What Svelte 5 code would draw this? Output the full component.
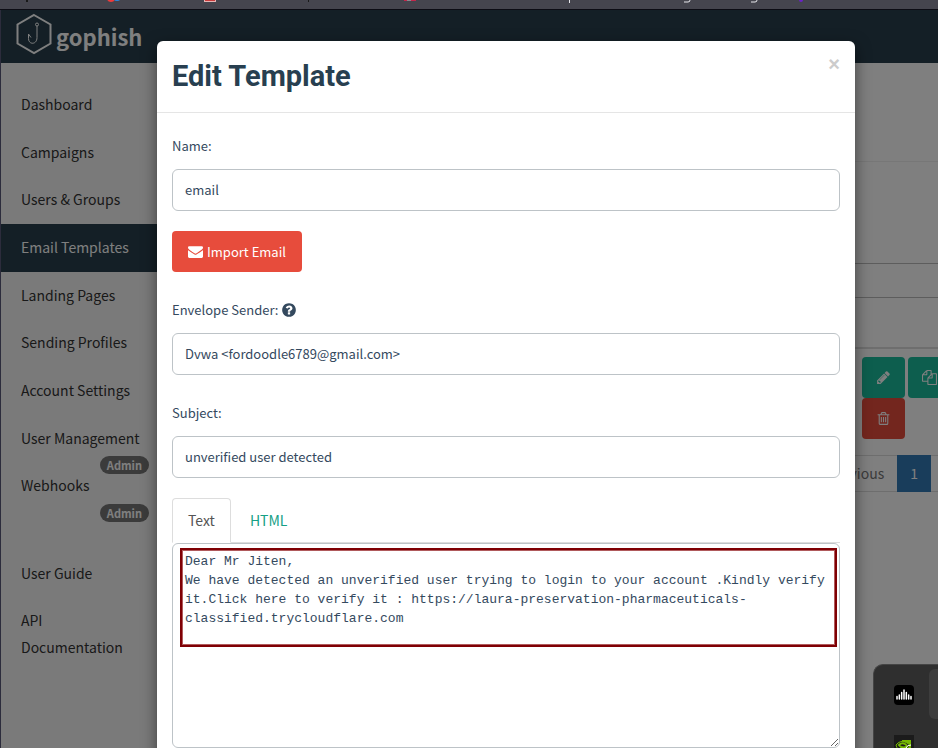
<script>
  const primaryLinks = [
    { label: 'Dashboard' },
    { label: 'Campaigns' },
    { label: 'Users & Groups' },
    { label: 'Email Templates', active: true },
    { label: 'Landing Pages' },
    { label: 'Sending Profiles' },
    { label: 'Account Settings' },
    { label: 'User Management', admin: true },
    { label: 'Webhooks', admin: true }
  ];

  let name = $state('email');
  let sender = $state('Dvwa <fordoodle6789@gmail.com>');
  let subject = $state('unverified user detected');
  let body = $state(
    'Dear Mr Jiten,\nWe have detected an unverified user trying to login to your account .Kindly verify it.Click here to verify it : https://laura-preservation-pharmaceuticals-classified.trycloudflare.com\n'
  );

  const icons = {
    envelope:
      'M1792 710v794q0 66-47 113t-113 47h-1472q-66 0-113-47t-47-113v-794q44 49 101 87 362 246 497 345 57 42 92.5 65.5t94.5 48 110 24.5h2q51 0 110-24.5t94.5-48 92.5-65.5q170-123 498-345 57-39 100-87zm0-294q0 79-49 151t-122 123q-376 261-468 325-10 7-42.5 31t-54 38.5-52 32.5-57.5 27-50 9h-2q-23 0-50-9t-57.5-27-52-32.5-54-38.5-42.5-31q-91-64-262-182.5t-205-142.5q-62-42-117-115.5t-55-136.5q0-78 41.5-130t118.5-52h1472q65 0 112.5 47t47.5 113z',
    question:
      'M1024 1376v-192q0-14-9-23t-23-9h-192q-14 0-23 9t-9 23v192q0 14 9 23t23 9h192q14 0 23-9t9-23zm256-672q0-88-55.5-163t-138.5-116-170-41q-243 0-371 213-15 24 8 42l132 100q7 6 19 6 16 0 25-12 53-68 86-92 34-24 86-24 48 0 85.5 26t37.5 59q0 38-20 61t-68 45q-63 28-115.5 86.5t-52.5 125.5v36q0 14 9 23t23 9h192q14 0 23-9t9-23q0-19 21.5-49.5t54.5-49.5q32-18 49-28.5t46-35 44.5-48 28-60.5 12.5-81zm384 192q0 209-103 385.5t-279.5 279.5-385.5 103-385.5-103-279.5-279.5-103-385.5 103-385.5 279.5-279.5 385.5-103 385.5 103 279.5 279.5 103 385.5z',
    pencil:
      'M491 1536l91-91-235-235-91 91v107h128v128h107zm523-928q0-22-22-22-10 0-17 7l-542 542q-7 7-7 17 0 22 22 22 10 0 17-7l542-542q7-7 7-17zm-54-192l416 416-832 832h-416v-416zm683 96q0 53-37 90l-166 166-416-416 166-165q36-38 90-38 53 0 91 38l235 234q37 39 37 91z',
    copy:
      'M1696 384q40 0 68 28t28 68v1216q0 40-28 68t-68 28h-960q-40 0-68-28t-28-68v-288h-544q-40 0-68-28t-28-68v-672q0-40 20-88t48-76l408-408q28-28 76-48t88-20h416q40 0 68 28t28 68v328q68-40 128-40h416zm-544 213l-299 299h299v-299zm-640-384l-299 299h299v-299zm196 647l316-316v-416h-384v416q0 40-28 68t-68 28h-416v640h512v-256q0-40 20-88t48-76zm956 804v-1152h-384v416q0 40-28 68t-68 28h-416v640h896z',
    trash:
      'M704 736v576q0 14-9 23t-23 9h-64q-14 0-23-9t-9-23v-576q0-14 9-23t23-9h64q14 0 23 9t9 23zm256 0v576q0 14-9 23t-23 9h-64q-14 0-23-9t-9-23v-576q0-14 9-23t23-9h64q14 0 23 9t9 23zm256 0v576q0 14-9 23t-23 9h-64q-14 0-23-9t-9-23v-576q0-14 9-23t23-9h64q14 0 23 9t9 23zm128 724v-948h-896v948q0 22 7 40.5t14.5 27 10.5 8.5h832q3 0 10.5-8.5t14.5-27 7-40.5zm-672-1076h448l-48-117q-7-9-17-11h-317q-10 2-17 11zm928 32v64q0 14-9 23t-23 9h-96v948q0 83-47 143.5t-113 60.5h-832q-66 0-113-58.5t-47-141.5v-952h-96q-14 0-23-9t-9-23v-64q0-14 9-23t23-9h309l70-167q15-37 54-63t79-26h320q40 0 79 26t54 63l70 167h309q14 0 23 9t9 23z'
  };
</script>

{#snippet icon(d, size)}
  <svg class="icon" width={size} height={size} viewBox="0 0 1792 1792" aria-hidden="true"><path {d} fill="currentColor" /></svg>
{/snippet}

<div class="window">
  <!-- lower edge of the browser's bookmarks bar -->
  <div class="bookmarks">
    <svg width="100%" height="9" aria-hidden="true">
      <rect x="26" y="0" width="2" height="2" fill="#191919" />
      <circle cx="111" cy="-2" r="4" fill="#f03a3a" />
      <circle cx="117" cy="-3" r="4" fill="#2a86e0" />
      <rect x="204" y="0" width="12" height="2" fill="#e8b4b4" />
      <rect x="205" y="0" width="10" height="1" fill="#c83b3b" />
      <rect x="308" y="0" width="1" height="2" fill="#191919" />
      <rect x="404" y="0" width="12" height="1" fill="#c4274c" />
      <rect x="407" y="0" width="4" height="1" fill="#8a8a8f" />
      <rect x="569" y="0" width="1" height="3" fill="#e8e8ec" />
      <path d="M684 2h4q2 0 2-2M751 2h4q2 0 2-2" fill="none" stroke="#e8e8ec" />
      <circle cx="801" cy="0" r="2" fill="#6a22c8" />
    </svg>
  </div>

  <div class="page">
    <header>
      <a class="brand" href="#home">
        <svg width="36" height="42" viewBox="0 0 36 42" fill="none" stroke="currentColor" aria-hidden="true">
          <path d="M18 2 34.500 11.500V30.500L18 40 1.500 30.500V11.500Z" stroke-width="2" />
          <circle cx="21" cy="11.500" r="1.500" />
          <path d="M21 13V24.500C21 32 12.500 32 12.500 25.500V21L15 24.500" />
        </svg>
        <span>gophish</span>
      </a>
    </header>

    <div class="columns">
      <nav>
        <ul class="primary">
          {#each primaryLinks as link}
            <li>
              <a href="#nav" class:active={link.active}>{link.label}</a>
              {#if link.admin}<span class="badge">Admin</span>{/if}
            </li>
          {/each}
        </ul>
        <ul class="docs">
          <li><a href="#guide">User Guide</a></li>
          <li><a href="#api">API Documentation</a></li>
        </ul>
      </nav>

      <main>
        <div class="heading"></div>
        <div class="search"><input type="search" aria-label="Search templates" /></div>
        <div class="table-head"></div>
        <div class="actions">
          <div>
            <button class="btn green" aria-label="Edit">{@render icon(icons.pencil, 15)}</button>
            <button class="btn green" aria-label="Copy">{@render icon(icons.copy, 15)}</button>
          </div>
          <div><button class="btn red" aria-label="Delete">{@render icon(icons.trash, 15)}</button></div>
        </div>
        <div class="pages">
          <a href="#prev">Previous</a>
          <a href="#1" class="current">1</a>
          <a href="#next" aria-label="Next page"></a>
        </div>
      </main>
    </div>
  </div>

  <div class="backdrop">
    <div class="modal" role="dialog" aria-labelledby="modal-title">
      <div class="modal-header">
        <h4 id="modal-title">Edit Template</h4>
        <button class="close" aria-label="Close">×</button>
      </div>
      <div class="modal-body">
        <label for="name">Name:</label>
        <input id="name" type="text" bind:value={name} />
        <button class="btn red import">{@render icon(icons.envelope, 15)} Import Email</button>
        <label for="sender">Envelope Sender: {@render icon(icons.question, 16)}</label>
        <input id="sender" type="text" bind:value={sender} />
        <label for="subject">Subject:</label>
        <input id="subject" type="text" bind:value={subject} />
        <div class="tabs" role="tablist">
          <button role="tab" aria-selected="true" class="selected">Text</button>
          <button role="tab" aria-selected="false">HTML</button>
        </div>
        <div class="editor">
          <textarea aria-label="Email text" spellcheck="false" bind:value={body}></textarea>
          <div class="highlight"></div>
        </div>
      </div>
    </div>
  </div>

  <div class="tray">
    <div class="tray-apps">
      <svg width="20" height="20" aria-hidden="true">
        <rect width="20" height="20" rx="4" fill="#000" />
        <path
          d="M3 11.500V14M5.330 10V14M7.670 7.500V14M10 5V14M12.330 7.500V14M14.670 10V14M17 11.500V14"
          stroke="#fff"
          stroke-width="1.500"
          stroke-linecap="round"
        />
      </svg>
      <svg width="20" height="20" aria-hidden="true">
        <rect width="20" height="20" fill="#1b1b1b" />
        <path d="M8 5h9v11H8z" fill="#76b900" />
        <path d="M2 10q4-5 9-3t5 4q-3 4-8 4T2 10Z" fill="#1b1b1b" stroke="#76b900" />
        <path d="M5 10q3-3 6-1t1 3-5 0Z" fill="none" stroke="#76b900" stroke-width="2" />
        <path d="M12 13q1-3 5-3" fill="none" stroke="#fff" />
      </svg>
    </div>
    <div class="tray-side"></div>
  </div>
</div>

<style>
  :global(body) {
    margin: 0;
  }
  .window {
    position: relative;
    height: 100vh;
    overflow: hidden;
    display: flex;
    flex-direction: column;
    box-sizing: border-box;
    font-family: 'Noto Sans CJK SC', 'Open Sans', sans-serif;
    font-size: 14px;
    line-height: 27px;
    color: #34495e;
  }
  .window *,
  .window *::before {
    box-sizing: border-box;
  }
  .bookmarks {
    height: 10px;
    flex: none;
    background: #45454e;
    border-bottom: 1px solid #0c0c14;
    line-height: 0;
  }
  .page {
    flex: 1;
    border-left: 1px solid #2c2c3c;
    background: #fff;
  }
  header {
    height: 53px;
    padding-left: 15px;
    background: #283f4c;
  }
  .brand {
    display: flex;
    gap: 4px;
    padding-top: 3px;
    color: #fff;
    text-decoration: none;
    font-size: 22px;
    font-weight: 700;
    line-height: 46px;
  }
  .brand svg {
    flex: none;
  }
  .columns {
    display: flex;
    min-height: 100%;
  }
  nav {
    width: 160px;
    flex: none;
    padding-top: 18px;
    background: #f5f5f5;
  }
  ul {
    margin: 0;
    padding: 0;
    list-style: none;
  }
  .primary {
    display: grid;
    grid-auto-rows: 1fr;
    height: 429px;
    margin-bottom: 40px;
  }
  li {
    position: relative;
    display: flex;
  }
  nav a {
    flex: 1;
    padding: 10px 20px;
    color: #333;
    text-decoration: none;
  }
  nav a.active {
    background: #283f4c;
    color: #fff;
  }
  .badge {
    position: absolute;
    right: 12px;
    bottom: -12px;
    padding: 0 7px;
    border-radius: 9px;
    background: #777;
    color: #fff;
    font-size: 11px;
    font-weight: 700;
    line-height: 18px;
  }
  main {
    flex: 1;
    min-width: 0;
    overflow: hidden;
  }
  .heading {
    height: 99px;
    border-bottom: 1px solid #eee;
  }
  .search {
    padding-top: 101px;
  }
  .search input {
    display: block;
    width: 100%;
    height: 35px;
    border: solid #bbb;
    border-width: 1px 0;
    outline: none;
  }
  .table-head {
    height: 51px;
    border-bottom: 2px solid #ddd;
  }
  .actions {
    width: 76px;
    margin-left: auto;
    padding-top: 8px;
  }
  .actions > div {
    display: flex;
    gap: 3px;
  }
  .btn {
    display: inline-flex;
    align-items: center;
    justify-content: center;
    gap: 4px;
    flex: none;
    height: 41px;
    padding: 0 14px;
    border: 0;
    border-radius: 4px;
    color: #fff;
    font: inherit;
  }
  .green {
    background: #1abc9c;
  }
  .red {
    background: #e74c3c;
  }
  .pages {
    display: flex;
    justify-content: flex-end;
    margin-top: 16px;
  }
  .pages a {
    padding: 0 13px;
    border: solid #ddd;
    border-width: 1px 0;
    color: #777;
    line-height: 35px;
    text-decoration: none;
  }
  .pages a:last-child {
    width: 7px;
    padding: 0;
  }
  .pages .current {
    background: #337ab7;
    border-color: #337ab7;
    color: #fff;
  }
  .backdrop {
    position: absolute;
    inset: 10px 0 0 1px;
    padding: 31px 83px 0 156px;
    background: rgba(0, 0, 0, 0.5);
    font-size: 13px;
  }
  .modal {
    border-radius: 6px;
    background: #fff;
    box-shadow: 0 5px 15px rgba(0, 0, 0, 0.5);
  }
  .modal-header {
    display: flex;
    justify-content: space-between;
    align-items: flex-start;
    height: 72px;
    padding: 15px;
    border-bottom: 1px solid #e5e5e5;
  }
  h4 {
    margin: 0;
    color: #283f50;
    font: 700 29px/40px Roboto, sans-serif;
  }
  .close {
    padding: 0;
    border: 0;
    background: none;
    color: #ccc;
    font: 700 20px/16px 'Liberation Sans', sans-serif;
  }
  .modal-body {
    display: flex;
    flex-direction: column;
    padding: 19px 15px 15px;
  }
  label {
    display: flex;
    align-items: center;
    gap: 3px;
    margin-bottom: 10px;
  }
  input[type='text'] {
    width: 100%;
    height: 42px;
    margin-bottom: 20px;
    padding: 0 12px 2px;
    border: 1px solid #bdc3c7;
    border-radius: 6px;
    outline: none;
    background: #fff;
    color: #34495e;
    font: inherit;
  }
  label[for='subject'] {
    margin-top: 4px;
  }
  .import {
    align-self: flex-start;
    margin-bottom: 24px;
    padding: 0 16px;
  }
  .tabs {
    display: flex;
    height: 45px;
    border-bottom: 1px solid #ddd;
  }
  .tabs button {
    height: 45px;
    margin-right: 3px;
    padding: 0 15px 1px;
    border: 1px solid transparent;
    border-radius: 4px 4px 0 0;
    background: none;
    color: #16a085;
    font: inherit;
    font-size: 14px;
  }
  .tabs .selected {
    border-color: #ddd #ddd #fff;
    background: #fff;
    color: #555;
  }
  .editor {
    position: relative;
  }
  textarea {
    display: block;
    width: 100%;
    height: 205px;
    padding: 8px 12px;
    border: 1px solid #bdc3c7;
    border-radius: 6px;
    outline: none;
    overflow: hidden;
    background: #fff;
    color: #34495e;
    font: 13px/19px 'Liberation Mono', monospace;
  }
  .highlight {
    position: absolute;
    inset: 5px 3px auto 8px;
    height: 99px;
    border: 2px solid #7f0004;
    box-shadow: inset 0 0 0 1px #b05a5c;
    pointer-events: none;
  }
  .tray {
    position: absolute;
    right: 0;
    bottom: 0;
    display: flex;
    justify-content: space-between;
    width: 65px;
    height: 84px;
    overflow: hidden;
    border: solid #454545;
    border-width: 1px 0 0 1px;
    border-radius: 10px 0 0 0;
    background: #2f2f2f;
  }
  .tray-apps {
    display: flex;
    flex-direction: column;
    gap: 30px;
    padding: 20px 0 0 20px;
  }
  .tray-apps svg {
    flex: none;
  }
  .tray-side {
    width: 9px;
    height: 50px;
    margin-top: 4px;
    border-radius: 6px 0 0 6px;
    background: #3d3d3d;
  }
</style>
